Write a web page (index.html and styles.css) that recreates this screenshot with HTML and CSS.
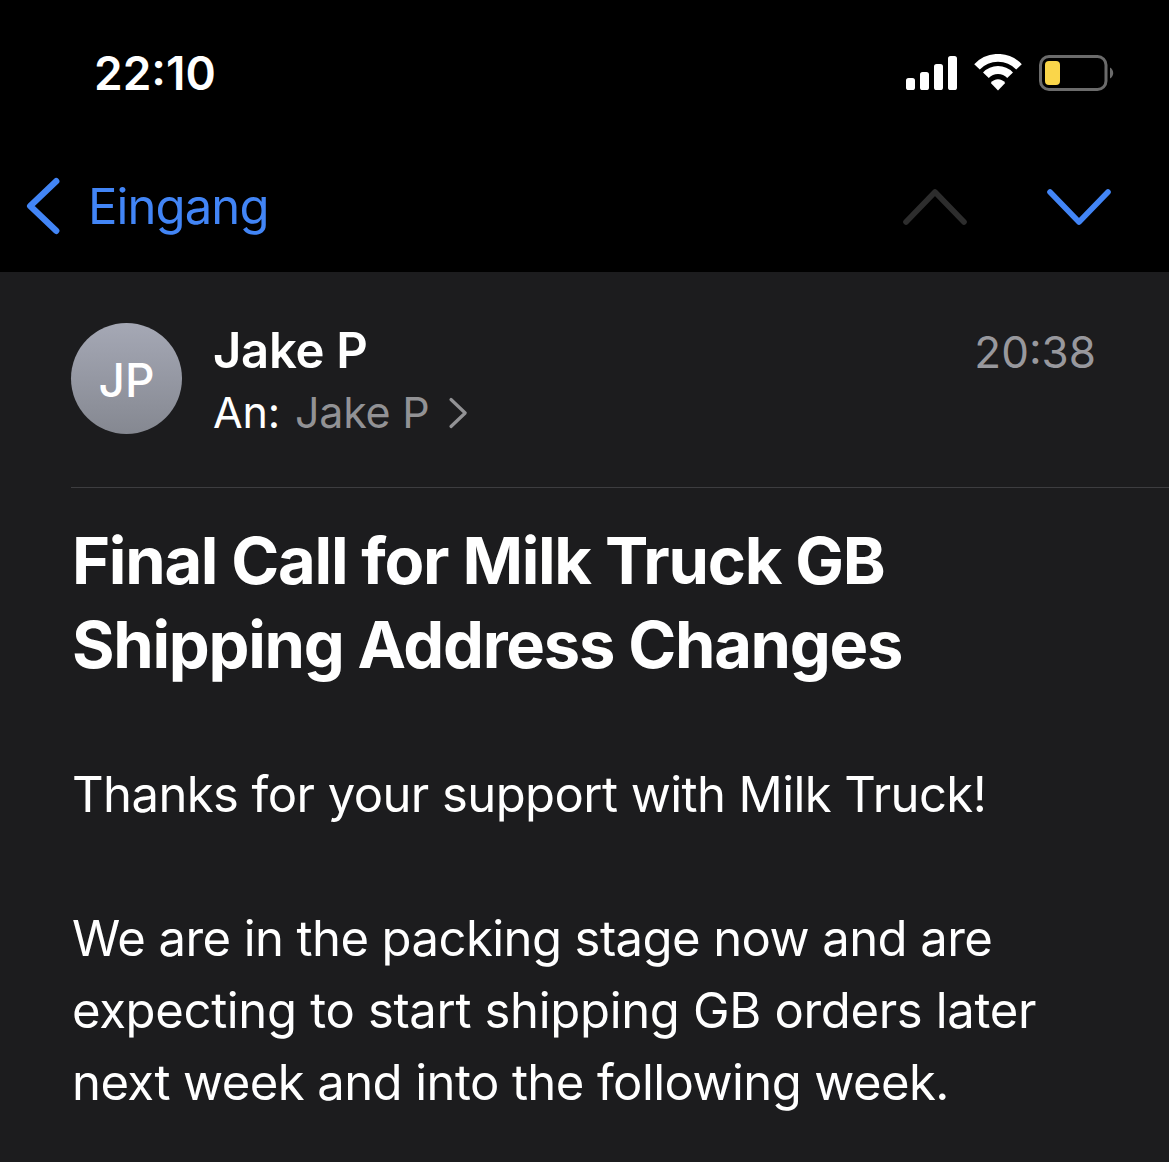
FILE: index.html
```html
<!DOCTYPE html>
<html lang="de">
<head>
<meta charset="utf-8">
<title>Mail</title>
<link rel="stylesheet" href="styles.css">
</head>
<body>
<header class="top">
  <div class="status">
    <span class="clock">22:10</span>
    <div class="indicators">
      <svg class="signal" width="52" height="36" viewBox="0 0 52 36" fill="#fff">
        <rect x="0" y="23" width="9" height="12" rx="2.6"/>
        <rect x="14" y="17" width="9" height="18" rx="2.6"/>
        <rect x="28" y="9" width="9" height="26" rx="2.6"/>
        <rect x="42" y="1" width="9" height="34" rx="2.6"/>
      </svg>
      <svg class="wifi" width="50" height="38" viewBox="0 0 50 38">
        <g fill="none" stroke="#fff">
          <path d="M4 12.8A28.95 28.95 0 0 1 46 12.8" stroke-width="7.7"/>
          <path d="M12.9 21.2A16.55 16.55 0 0 1 37.1 21.2" stroke-width="7.9"/>
        </g>
        <path d="M25 36.4L17.8 29C21.4 24 28.6 24 32.2 29Z" fill="#fff"/>
      </svg>
      <svg class="battery" width="76" height="36" viewBox="0 0 76 36">
        <rect x="1.5" y="1.5" width="65.5" height="33" rx="8.5" fill="none" stroke="#6b6b6b" stroke-width="3"/>
        <rect x="6" y="6" width="15" height="24" rx="4" fill="#fad64a"/>
        <path d="M71 12.5C75.3 15 75.3 21 71 23.5Z" fill="#6b6b6b"/>
      </svg>
    </div>
  </div>
  <nav class="nav">
    <a class="back">
      <svg width="34" height="58" viewBox="0 0 34 58" fill="none" stroke="#4285f6" stroke-width="6.4" stroke-linecap="round" stroke-linejoin="round"><path d="M30.2 4.2L4.2 29L30.2 53.8"/></svg>
      <span class="back-label">Eingang</span>
    </a>
    <div class="pager">
      <svg width="66" height="38" viewBox="0 0 66 38" fill="none" stroke="#2d2d2d" stroke-width="5.6" stroke-linecap="round" stroke-linejoin="round"><path d="M4 34L33 4L62 34"/></svg>
      <svg width="66" height="38" viewBox="0 0 66 38" fill="none" stroke="#4285f6" stroke-width="5.6" stroke-linecap="round" stroke-linejoin="round"><path d="M4 4L33 34L62 4"/></svg>
    </div>
  </nav>
</header>
<main class="message">
  <section class="sender">
    <div class="avatar">JP</div>
    <div class="people">
      <div class="from">Jake P</div>
      <div class="to">
        <span class="to-label">An:</span>
        <span class="to-name">Jake P</span>
        <svg width="20" height="32" viewBox="0 0 20 32" fill="none" stroke="#929295" stroke-width="3.2" stroke-linecap="round" stroke-linejoin="round"><path d="M3 2.5L17.2 16L3 29.5"/></svg>
      </div>
    </div>
    <time class="time">20:38</time>
  </section>
  <h1 class="subject">Final Call for Milk Truck GB<br>Shipping Address Changes</h1>
  <div class="body">
    <p>Thanks for your support with Milk Truck!</p>
    <p>We are in the packing stage now and are<br><span class="wide">expecting to start shipping GB orders later</span><br>next week and into the following week.</p>
  </div>
</main>
</body>
</html>
```
FILE: styles.css
```css
* { box-sizing: border-box; }
body {
  margin: 0;
  background: #1c1c1e;
  color: #fff;
  font-family: Inter, "Liberation Sans", sans-serif;
  white-space: nowrap;
}
svg { display: block; flex: none; }
.top { height: 272px; background: #000; }
.status {
  height: 140px;
  padding: 6px 54px 0 94px;
  display: flex;
  align-items: center;
  justify-content: space-between;
}
.clock { font-size: 46px; font-weight: 600; line-height: 60px; }
.indicators { display: flex; align-items: center; }
.wifi { margin-left: 15px; }
.battery { margin-left: 16px; }
.nav {
  height: 132px;
  padding: 0 57px 0 26px;
  display: flex;
  align-items: center;
  justify-content: space-between;
}
.back { display: flex; align-items: center; gap: 28px; color: #4285f6; }
.back-label { padding-top: 2px; font-size: 49px; line-height: 64px; letter-spacing: -0.9px; }
.pager { display: flex; gap: 78px; padding-top: 2px; }
.sender {
  height: 216px;
  margin-left: 71px;
  padding: 51px 73px 0 0;
  border-bottom: 1px solid #3d3d40;
  display: flex;
  align-items: flex-start;
}
.avatar {
  width: 111px;
  height: 111px;
  padding-top: 3px;
  border-radius: 50%;
  background: linear-gradient(#a5a8b5, #858891);
  font-size: 46px;
  font-weight: 500;
  line-height: 108px;
  text-align: center;
}
.people { margin-left: 31px; }
.from { font-size: 49px; font-weight: 600; line-height: 56px; letter-spacing: -0.3px; }
.to { display: flex; align-items: center; font-size: 43px; line-height: 66px; letter-spacing: -0.2px; }
.to-name { margin-left: 15px; color: #929295; }
.to svg { margin: 1px 0 0 18px; }
.time { margin-left: auto; font-size: 44px; line-height: 58px; color: #98989d; }
.subject {
  margin: 31px 0 0 72px;
  font-size: 65px;
  font-weight: 700;
  line-height: 84px;
  letter-spacing: -1.28px;
}
.body { margin: 72px 0 0 72px; font-size: 49px; line-height: 72px; letter-spacing: -0.57px; }
.body p { margin: 0 0 72px; }
.body p:last-child { margin-bottom: 0; }
.wide { letter-spacing: -0.33px; }
```
